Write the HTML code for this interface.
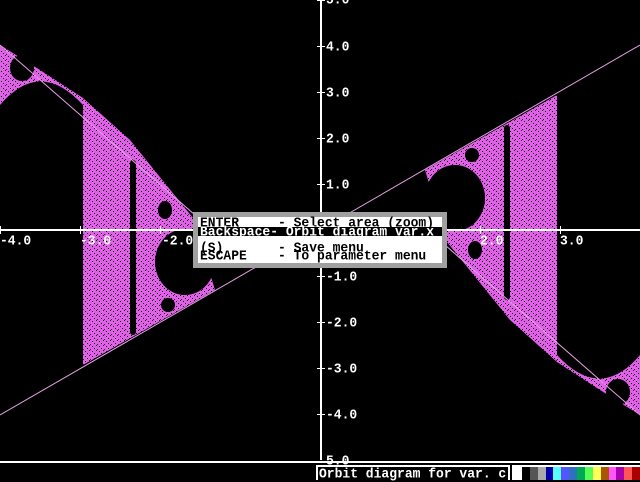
<!DOCTYPE html>
<html><head><style>
body{margin:0;width:640px;height:480px;background:#000;overflow:hidden;position:relative;font-family:"Liberation Mono",monospace;font-weight:bold}
.t{position:absolute;font-size:13px;line-height:9px;white-space:pre;color:#fff;transform:scaleY(1.05);transform-origin:0 0}
</style></head><body>
<svg width="640" height="480" style="position:absolute;left:0;top:0">
<defs>
<pattern id="sp" width="7" height="5" patternUnits="userSpaceOnUse">
<rect width="7" height="5" fill="#e060e8"/>
<rect x="1" y="1" width="1" height="1" fill="#000"/><rect x="5" y="0" width="1" height="1" fill="#000"/><rect x="3" y="3" width="1" height="1" fill="#000"/><rect x="6" y="4" width="1" height="1" fill="#600060"/>
</pattern>
<g id="half">
<polygon points="0,45 40,70 83,98 130,140 193,218 215,290 83,365 83,110 60,95 40,80 0,110" fill="url(#sp)"/>
<path d="M0,105 Q40,58 83,105 L83,440 L0,440Z" fill="#000"/>
<ellipse cx="22" cy="68" rx="12" ry="13" fill="#000"/>
<rect x="130" y="160" width="6" height="175" rx="3" fill="#000"/>
<ellipse cx="185" cy="262" rx="30" ry="33" fill="#000"/>
<ellipse cx="165" cy="210" rx="7" ry="9" fill="#000"/>
<ellipse cx="168" cy="305" rx="7" ry="7" fill="#000"/>
<line x1="0" y1="45" x2="195" y2="215" stroke="#e6a0e6" stroke-width="1"/>
<line x1="0" y1="415" x2="320" y2="230" stroke="#e6a0e6" stroke-width="1"/>
</g>
</defs>
<use href="#half"/>
<use href="#half" transform="rotate(180 320 230)"/>
<rect x="0" y="229" width="640" height="2" fill="#fff"/>
<rect x="320" y="0" width="2" height="460" fill="#fff"/>
<g fill="#fff">
<rect x="0" y="226" width="1" height="8"/><rect x="80" y="226" width="1" height="8"/><rect x="160" y="226" width="1" height="8"/><rect x="240" y="226" width="1" height="8"/>
<rect x="400" y="226" width="1" height="8"/><rect x="480" y="226" width="1" height="8"/><rect x="560" y="226" width="1" height="8"/>
<rect x="317" y="0" width="8" height="1"/><rect x="317" y="46" width="8" height="1"/><rect x="317" y="92" width="8" height="1"/><rect x="317" y="138" width="8" height="1"/><rect x="317" y="184" width="8" height="1"/>
<rect x="317" y="276" width="8" height="1"/><rect x="317" y="322" width="8" height="1"/><rect x="317" y="368" width="8" height="1"/><rect x="317" y="414" width="8" height="1"/>
</g>
<rect x="0" y="461" width="640" height="2" fill="#fff"/>
</svg>
<div class="t" style="left:0;top:236px">-4.0</div>
<div class="t" style="left:80px;top:236px">-3.0</div>
<div class="t" style="left:162px;top:236px">-2.0</div>
<div class="t" style="left:480px;top:236px">2.0</div>
<div class="t" style="left:560px;top:236px">3.0</div>
<div class="t" style="left:326px;top:-5px">5.0</div>
<div class="t" style="left:326px;top:42px">4.0</div>
<div class="t" style="left:326px;top:88px">3.0</div>
<div class="t" style="left:326px;top:134px">2.0</div>
<div class="t" style="left:326px;top:180px">1.0</div>
<div class="t" style="left:326px;top:272px">-1.0</div>
<div class="t" style="left:326px;top:318px">-2.0</div>
<div class="t" style="left:326px;top:364px">-3.0</div>
<div class="t" style="left:326px;top:410px">-4.0</div>
<div class="t" style="left:326px;top:456px">5.0</div>
<div style="position:absolute;left:193px;top:212px;width:254px;height:56px;background:#a0a0a0"></div>
<div style="position:absolute;left:198px;top:217px;width:244px;height:46px;background:#fff"></div>
<div style="position:absolute;left:198px;top:227px;width:244px;height:9px;background:#000"></div>
<div class="t" style="left:200px;top:218px;color:#000">ENTER     - Select area (zoom)</div>
<div class="t" style="left:200px;top:227px;color:#fff">Backspace- Orbit diagram var.x</div>
<div class="t" style="left:200px;top:243px;color:#000">(S)       - Save menu</div>
<div class="t" style="left:200px;top:251px;color:#000">ESCAPE    - To parameter menu</div>
<div style="position:absolute;left:316px;top:465px;width:194px;height:15px;background:#fff"></div>
<div style="position:absolute;left:318px;top:467px;width:190px;height:13px;background:#000"></div>
<div class="t" style="left:319px;top:469px">Orbit diagram for var. c</div>
<div style="position:absolute;left:512px;top:465px;width:128px;height:15px;background:#fff"></div>
<div style="position:absolute;left:514px;top:467px;width:126px;height:13px;display:flex;background:#000">
<span style="flex:1;background:#fff"></span><span style="flex:1;background:#000"></span><span style="flex:1;background:#555"></span><span style="flex:1;background:#aaa"></span><span style="flex:1;background:#0000aa"></span><span style="flex:1;background:#55ffff"></span><span style="flex:1;background:#5555ff"></span><span style="flex:1;background:#3070c0"></span><span style="flex:1;background:#00aa55"></span><span style="flex:1;background:#55ff55"></span><span style="flex:1;background:#ffff55"></span><span style="flex:1;background:#aa5500"></span><span style="flex:1;background:#ff55ff"></span><span style="flex:1;background:#aa00aa"></span><span style="flex:1;background:#ff5555"></span><span style="flex:1;background:#aa0000"></span>
</div>
</body></html>
